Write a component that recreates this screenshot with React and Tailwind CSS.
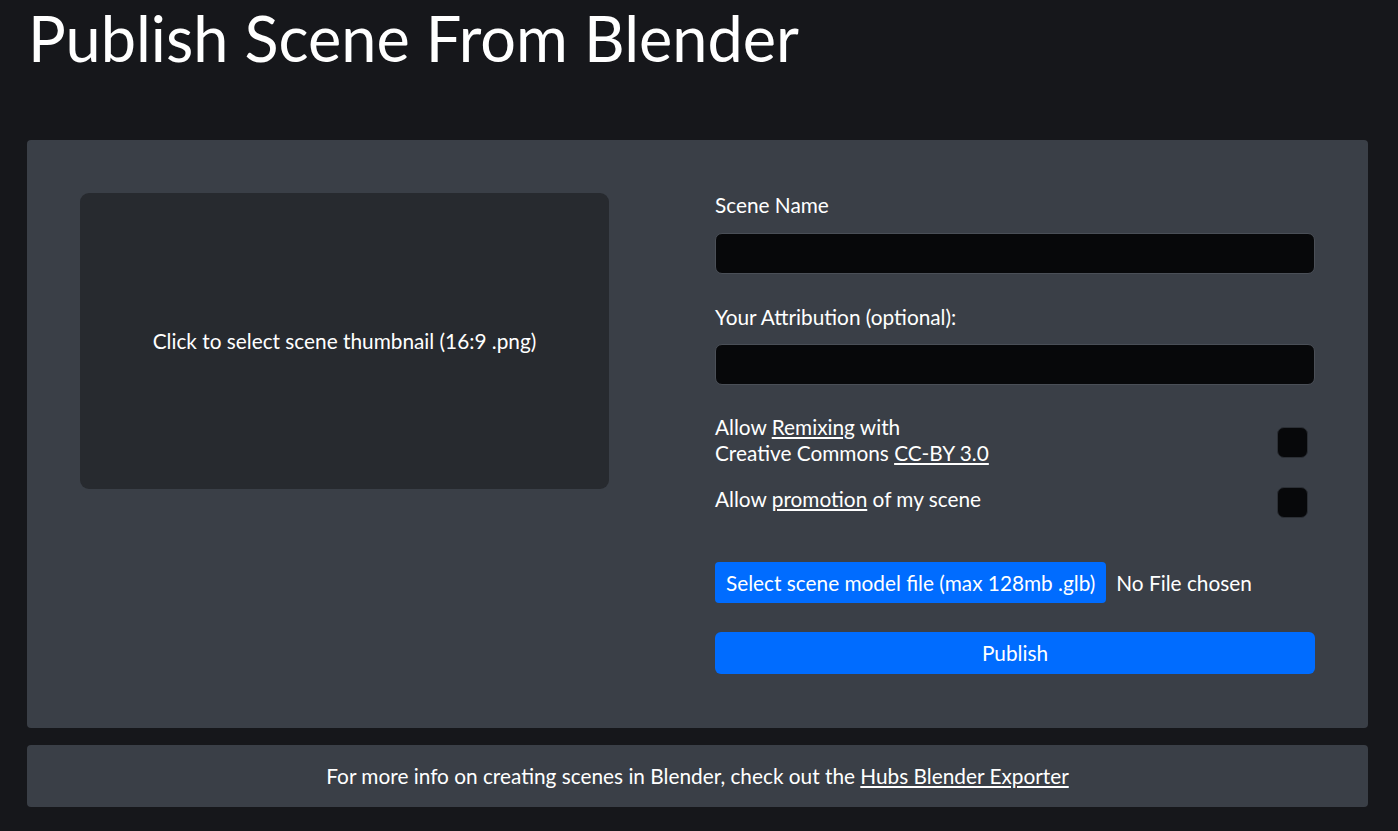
import React from 'react';

const CheckRow = ({ children, boxOffset }) => (
  <div className="flex items-start justify-between">
    <div className="leading-[26px]">{children}</div>
    <input
      type="checkbox"
      className={`appearance-none w-[31px] h-[31px] mr-[7px] rounded-[7px] bg-[#07080a] border border-[#2b2f35] ${boxOffset}`}
    />
  </div>
);

const App = () => {
  return (
    <div className="min-h-[831px] bg-[#16171b] text-white font-['Lato','Noto_Sans',sans-serif] pl-[27px] pb-6">
      <h1 className="text-[63px] leading-[72px] pt-[2px] pl-[1px]">Publish Scene From Blender</h1>

      <div className="mt-[66px] w-[1341px] bg-[#3a3f47] rounded-[4px] pl-[53px] pr-[53px] pt-[53px] pb-[54px] flex justify-between">
        <button className="w-[529px] h-[296px] bg-[#272a2f] rounded-[9px] flex items-center justify-center text-[20.8px] text-white">
          Click to select scene thumbnail (16:9 .png)
        </button>

        <div className="w-[600px] flex flex-col text-[20.8px]">
          <label className="leading-6">Scene Name</label>
          <input
            type="text"
            className="mt-4 h-[41px] bg-[#07080a] border border-[#4a4f57] rounded-[7px] px-3 text-white outline-none"
          />

          <label className="mt-[31px] leading-6">Your Attribution (optional):</label>
          <input
            type="text"
            className="mt-[15px] h-[41px] bg-[#07080a] border border-[#4a4f57] rounded-[7px] px-3 text-white outline-none"
          />

          <div className="mt-[29px]">
            <CheckRow boxOffset="mt-[13px]">
              Allow <a className="underline">Remixing</a> with
              <br />
              Creative Commons <a className="underline">CC-BY 3.0</a>
            </CheckRow>
          </div>
          <div className="mt-[20px]">
            <CheckRow boxOffset="mt-[1px]">
              Allow <a className="underline">promotion</a> of my scene
            </CheckRow>
          </div>

          <div className="mt-[44px] flex items-center">
            <button className="h-[41px] px-[11px] bg-[#006cff] rounded-[4px] text-white">
              Select scene model file (max 128mb .glb)
            </button>
            <span className="ml-[10px]">No File chosen</span>
          </div>

          <button className="mt-[29px] h-[42px] w-full bg-[#006cff] rounded-[6px] text-white">
            Publish
          </button>
        </div>
      </div>

      <div className="mt-[17px] w-[1341px] h-[62px] bg-[#3a3f47] rounded-[4px] flex items-center justify-center text-[20.8px]">
        <span>
          For more info on creating scenes in Blender, check out the{' '}
          <a className="underline">Hubs Blender Exporter</a>
        </span>
      </div>
    </div>
  );
};

export default App;
